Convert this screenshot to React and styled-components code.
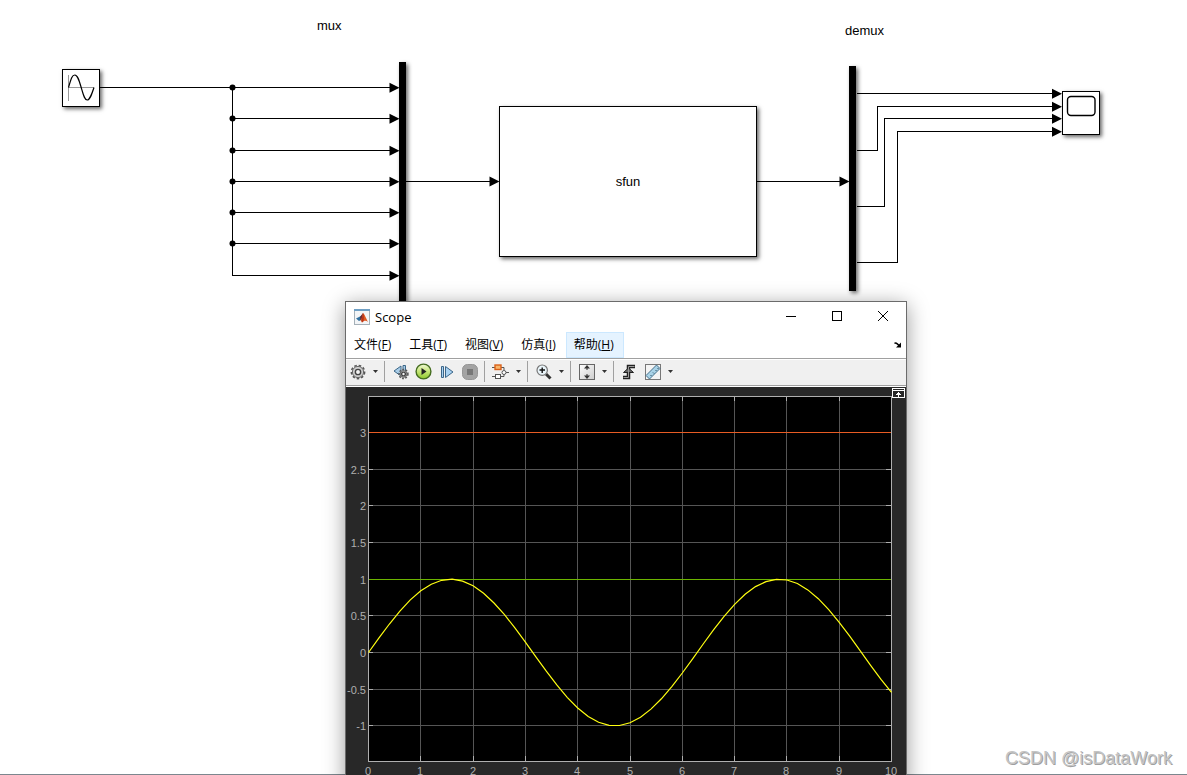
import React from 'react';
import styled, { createGlobalStyle } from 'styled-components';

const GlobalStyle = createGlobalStyle`
  * {
    box-sizing: border-box;
  }

  body {
    margin: 0;
    overflow: hidden;
    background: #fff;
    font-family: "Liberation Sans", Arial, sans-serif;
  }
`;

const Canvas = styled.main`
  position: relative;
  height: 100vh;
  overflow: hidden;
  background: linear-gradient(#7c878e, #7c878e) bottom / 100% 1px no-repeat;
`;

const Wires = styled.svg`
  position: absolute;
  top: 0;
  left: 0;
  width: 100%;
  height: 100%;
  overflow: visible;
`;

const Block = styled.div`
  position: absolute;
  left: ${(props) => props.$x}px;
  top: ${(props) => props.$y}px;
  width: ${(props) => props.$w}px;
  height: ${(props) => props.$h}px;
  display: flex;
  align-items: center;
  justify-content: center;
  border: 1px solid #000;
  background: ${(props) => (props.$solid ? '#000' : '#fff')};
  box-shadow: 2px 2px 4px rgba(0, 0, 0, 0.6);
  color: #000;
  font-size: 13px;
  line-height: 16px;
`;

const BlockName = styled.span`
  position: absolute;
  left: ${(props) => props.$x}px;
  top: ${(props) => props.$y}px;
  color: #000;
  font-size: 13px;
  line-height: 16px;
`;

const Window = styled.section`
  position: absolute;
  left: 345px;
  top: 301px;
  width: 562px;
  border: 1px solid #6b6b6b;
  background: #fff;
  box-shadow: 0 4px 20px rgba(0, 0, 0, 0.4);
  font-family: "Open Sans", "Noto Sans CJK SC", sans-serif;
`;

const TitleBar = styled.header`
  display: flex;
  align-items: center;
  height: 30px;
  padding-left: 8px;
`;

const Title = styled.h1`
  flex: 1;
  margin: 0 0 0 5px;
  font-size: 13px;
  font-weight: 400;
  line-height: 16px;
`;

const CaptionButton = styled.button`
  display: flex;
  align-items: center;
  align-self: flex-start;
  justify-content: center;
  width: 46px;
  height: 28px;
  padding: 0;
  border: 0;
  background: none;
`;

const MenuBar = styled.nav`
  display: flex;
  align-items: center;
  height: 26px;
  padding-right: 4px;
`;

const MenuItem = styled.button`
  height: 26px;
  padding: 0 9px 0 7px;
  border: 1px solid ${(props) => (props.$active ? '#cce8ff' : 'transparent')};
  background: ${(props) => (props.$active ? '#e5f3ff' : 'none')};
  color: #000;
  font-family: inherit;
  font-size: 12px;
  line-height: 24px;
  white-space: nowrap;
`;

const DockButton = styled.button`
  display: flex;
  margin-left: auto;
  padding: 0;
  border: 0;
  background: none;
`;

const ToolBar = styled.div`
  display: flex;
  align-items: center;
  height: 29px;
  padding-bottom: 2px;
  border-top: 1px solid #a0a0a0;
  border-bottom: 1px solid #fff;
  background: #f0f0f0;
  box-shadow: inset 0 1px #fff, inset 0 -1px #a0a0a0;
`;

const ToolButton = styled.button`
  display: flex;
  align-items: center;
  justify-content: center;
  width: 23px;
  height: 22px;
  padding: 0;
  border: 0;
  background: none;
`;

const CaretButton = styled(ToolButton)`
  width: 12px;
`;

const Separator = styled.span`
  width: 1px;
  height: 21px;
  margin: 0 4px 0 3px;
  background: #a0a0a0;
`;

const Plot = styled.svg`
  display: block;
  width: 560px;
  height: 400px;
  background: #282828;
  font-family: "Liberation Sans", Arial, sans-serif;
  font-size: 11px;
`;

const Watermark = styled.span`
  position: absolute;
  right: 15px;
  bottom: 5px;
  color: #c4c4c4;
  font-family: "Liberation Sans", Arial, sans-serif;
  font-size: 18px;
  line-height: 24px;
  text-shadow: 1px 1px 0 #a0a0a0;
`;

const muxInputs = [87, 118, 150, 181, 212, 243, 275];

const demuxOutputs = [
  { from: 93, bend: 877, to: 93 },
  { from: 150, bend: 877, to: 106 },
  { from: 206, bend: 884, to: 118 },
  { from: 262, bend: 897, to: 131 },
];

const menus = [
  { label: '文件', accessKey: 'F' },
  { label: '工具', accessKey: 'T' },
  { label: '视图', accessKey: 'V' },
  { label: '仿真', accessKey: 'I' },
  { label: '帮助', accessKey: 'H', active: true },
];

function Arrow({ x, y }) {
  return <path d={`M${x} ${y + 0.5} l-10 -5 v10 z`} />;
}

function ModelWires() {
  return (
    <Wires aria-hidden="true">
      <g fill="none" stroke="#000" shapeRendering="crispEdges">
        <path d="M100 87.5 H390 M232.5 87 V275.5" />
        {muxInputs.slice(1).map((y) => (
          <path key={y} d={`M232 ${y + 0.5} H390`} />
        ))}
        <path d="M406 181.5 H490 M757 181.5 H840" />
        {demuxOutputs.map(({ from, bend, to }) => (
          <path key={from} d={`M857 ${from + 0.5} H${bend + 0.5} V${to + 0.5} H1053`} />
        ))}
      </g>
      {muxInputs.slice(0, -1).map((y) => (
        <circle key={y} cx="232.5" cy={y + 0.5} r="3" />
      ))}
      {muxInputs.map((y) => (
        <Arrow key={y} x={399.5} y={y + 0.3} />
      ))}
      <Arrow x={499.5} y={181} />
      <Arrow x={849.5} y={181} />
      {demuxOutputs.map(({ to }) => (
        <Arrow key={to} x={1062} y={to + 0.3} />
      ))}
    </Wires>
  );
}

function SineIcon() {
  return (
    <svg width="30" height="30" fill="none" stroke="#000">
      <path d="M2.5 2 V28 M2 14.5 H28" stroke="#999" />
      <path d="M2.5 14.5 C5 6 6 2 8.8 2 S13 7 15.2 14.5 S18.5 27 21.2 27 S25.5 22 28 14.5" strokeWidth="1.2" />
    </svg>
  );
}

function ScopeScreenIcon() {
  return (
    <svg width="36" height="42" fill="none" stroke="#000">
      <rect x="4.5" y="4.5" width="27.5" height="19" rx="3.5" strokeWidth="1.4" />
    </svg>
  );
}

function MatlabIcon() {
  return (
    <svg width="16" height="16">
      <rect x="0.5" y="0.5" width="15" height="15" fill="#f3f5f7" stroke="#a5b0b8" />
      <rect x="0" y="0" width="16" height="2" fill="#6f9fc4" />
      <path d="M2 9.5 L6 7.5 L8 6 L7 11 L5 12 Z" fill="#2f6f9f" />
      <path d="M6 8 L9 4 L8.5 12 L6.5 11 Z" fill="#6c2b32" />
      <path d="M9 4 C10.5 5 12 9 14 13 C12 11.5 10.5 11 8 13.5 L6.5 11 C8 10 8.5 6 9 4 Z" fill="#df5a22" />
      <path d="M9 4 C10 6 10 9 9.5 12 L8 13.5 L7.5 11 Z" fill="#b5331c" />
    </svg>
  );
}

function GearShape({ cx, cy, r }) {
  return (
    <g transform={`translate(${cx} ${cy})`}>
      <circle r={r - 0.8} fill="none" stroke="#555" strokeWidth="1.6" strokeDasharray={`${r * 0.35} ${r * 0.26}`} />
      <circle r={r - 1.8} fill="#cfcfcf" stroke="#666" />
      <circle r={r * 0.36} fill="#f5f5f5" stroke="#444" strokeWidth="1.4" />
    </g>
  );
}

function GearIcon() {
  return (
    <svg width="16" height="16">
      <GearShape cx={8} cy={8} r={7.4} />
    </svg>
  );
}

function StepBackIcon() {
  return (
    <svg width="16" height="16">
      <path d="M1 7 L8 2 V12 Z M10 1.5 H12.5 V9 H10 Z" fill="#a9cde8" stroke="#3c6788" />
      <GearShape cx={10.5} cy={10} r={5.2} />
    </svg>
  );
}

function RunIcon() {
  return (
    <svg width="17" height="17">
      <defs>
        <linearGradient id="run" x1="0" y1="0" x2="0" y2="1">
          <stop offset="0" stopColor="#f2f9d8" />
          <stop offset="0.5" stopColor="#c4e574" />
          <stop offset="1" stopColor="#8cc62c" />
        </linearGradient>
      </defs>
      <circle cx="8.5" cy="8.5" r="7.4" fill="url(#run)" stroke="#446c20" strokeWidth="1.4" />
      <path d="M6.5 5 L11.5 8.5 L6.5 12 Z" fill="#222" />
    </svg>
  );
}

function StepForwardIcon() {
  return (
    <svg width="16" height="16">
      <path d="M2.5 2.5 H4.5 V13.5 H2.5 Z M6.5 2.5 L14 8 L6.5 13.5 Z" fill="#a9d2f2" stroke="#3b6588" />
    </svg>
  );
}

function StopIcon() {
  return (
    <svg width="16" height="16">
      <rect x="0.5" y="0.5" width="15" height="15" rx="5" fill="#a3a3a3" stroke="#969696" />
      <rect x="5" y="5" width="6" height="6" fill="#777" />
    </svg>
  );
}

function BlocksIcon() {
  return (
    <svg width="17" height="16" fill="#fff" stroke="#555">
      <path d="M0 3.5 H3 M9 3.5 H12 V6 M0 12.5 H3 M9 12.5 H12 V10 M14 8.5 H17" fill="none" />
      <rect x="3" y="1" width="6" height="4.5" fill="#f9b66c" stroke="#d9611a" strokeWidth="1.4" />
      <rect x="3.5" y="10.5" width="5" height="4" />
      <circle cx="12" cy="8.5" r="2" />
    </svg>
  );
}

function ZoomIcon() {
  return (
    <svg width="16" height="16">
      <path d="M10 10 L14.5 14.5" stroke="#333" strokeWidth="3" />
      <circle cx="6.2" cy="6.2" r="5.2" fill="#eaf5fa" stroke="#777" strokeWidth="1.2" />
      <path d="M3.5 6 H9 M6.2 3.5 V9" stroke="#111" strokeWidth="1.4" />
    </svg>
  );
}

function FitIcon() {
  return (
    <svg width="16" height="16">
      <defs>
        <linearGradient id="panel" x1="0" y1="0" x2="1" y2="1">
          <stop offset="0" stopColor="#fff" />
          <stop offset="1" stopColor="#ccc" />
        </linearGradient>
      </defs>
      <rect x="0.5" y="0.5" width="15" height="15" fill="url(#panel)" stroke="#666" />
      <path d="M8 1 L11 4.5 H5 Z M8 15 L11 11.5 H5 Z" fill="#333" />
      <path d="M8 4 V6 M8 10 V12" stroke="#333" />
    </svg>
  );
}

function TriggerIcon() {
  return (
    <svg width="15" height="16" fill="none">
      <path d="M1 13.5 H6.5 V2.5 H13" stroke="#222" strokeWidth="3.5" />
      <path d="M1.5 8.5 L6.5 4 L11.5 8.5 Z" fill="#666" stroke="#222" />
      <path d="M1.5 13.5 H6.5 V2.5 H12.5" stroke="#999" />
    </svg>
  );
}

function RulerIcon() {
  return (
    <svg width="16" height="16">
      <rect x="0.5" y="0.5" width="15" height="15" fill="#f4f4f4" stroke="#777" />
      <path d="M1 11.5 L11.5 1 L15 4.5 L4.5 15 Z" fill="#a9d3e8" stroke="#46718c" />
      <path d="M6.5 12 l-1 -1 M9 9.5 l-1 -1 M11.5 7 l-1 -1 M13.5 5 l-1 -1" stroke="#315267" />
    </svg>
  );
}

function Caret() {
  return (
    <CaretButton aria-label="More options">
      <svg width="5" height="3">
        <path d="M0 0 H5 L2.5 3 Z" fill="#333" />
      </svg>
    </CaretButton>
  );
}

// Plot area inside the svg
const left = 22;
const top = 9;
const right = 545;
const bottom = 374;
const unitX = 52.3;
const unitY = 73.3;
const zeroY = 265;

const toX = (t) => Math.round(left + t * unitX);
const toY = (v) => Math.round(zeroY - v * unitY);

const xTicks = [0, 1, 2, 3, 4, 5, 6, 7, 8, 9, 10];
const yTicks = [3, 2.5, 2, 1.5, 1, 0.5, 0, -0.5, -1];

const sinePoints = Array.from({ length: 51 }, (_, i) => {
  const t = i / 5;
  const x = left + 0.5 + t * unitX;
  const y = zeroY + 0.5 - Math.sin(t) * unitY;
  return `${x.toFixed(1)},${y.toFixed(1)}`;
}).join(' ');

function ScopePlot() {
  return (
    <Plot role="img" aria-label="Scope signals">
      <rect x={left} y={top} width={right - left} height={bottom - top} fill="#000" />
      <g fill="none" stroke="#555">
        {xTicks.map((t) => (
          <path key={t} d={`M${toX(t) + 0.5} ${top} V${bottom}`} />
        ))}
        {yTicks.map((v) => (
          <path key={v} d={`M${left} ${toY(v) + 0.5} H${right}`} />
        ))}
      </g>
      <g fill="none" stroke="#afafaf">
        <rect x={left + 0.5} y={top + 0.5} width={right - left} height={bottom - top} />
        {xTicks.map((t) => (
          <path key={t} d={`M${toX(t) + 0.5} ${top} v5 M${toX(t) + 0.5} ${bottom} v-5`} />
        ))}
        {yTicks.map((v) => (
          <path key={v} d={`M${left} ${toY(v) + 0.5} h5 M${right} ${toY(v) + 0.5} h-5`} />
        ))}
      </g>
      <rect x={left + 1} y={toY(3)} width={right - left - 1} height="1" fill="#e85c24" />
      <rect x={left + 1} y={toY(1)} width={right - left - 1} height="1" fill="#6cb400" />
      <polyline points={sinePoints} fill="none" stroke="#ffff11" strokeWidth="1.2" />
      <g fill="#afafaf">
        {yTicks.map((v) => (
          <text key={v} x={left - 2} y={toY(v) + 5} textAnchor="end">{v}</text>
        ))}
        {xTicks.map((t) => (
          <text key={t} x={toX(t)} y={bottom + 14} textAnchor="middle">{t}</text>
        ))}
      </g>
      <rect x="546.5" y="1.5" width="12" height="9" fill="#282828" stroke="#fff" />
      <path d="M547 3h11v1h-11z M552 5h1v1h1v1h1v1h-2v2h-1v-2h-2v-1h1v-1h1z" fill="#fff" />
    </Plot>
  );
}

function ScopeWindow() {
  return (
    <Window>
      <TitleBar>
        <MatlabIcon />
        <Title>Scope</Title>
        <CaptionButton aria-label="Minimize">
          <svg width="10" height="10"><path d="M0 5.5 H10" stroke="#000" /></svg>
        </CaptionButton>
        <CaptionButton aria-label="Maximize">
          <svg width="10" height="10"><rect x="0.5" y="0.5" width="9" height="9" fill="none" stroke="#000" /></svg>
        </CaptionButton>
        <CaptionButton aria-label="Close">
          <svg width="10" height="10"><path d="M0 0 L10 10 M10 0 L0 10" stroke="#000" /></svg>
        </CaptionButton>
      </TitleBar>
      <MenuBar>
        {menus.map(({ label, accessKey, active }) => (
          <MenuItem key={accessKey} $active={active}>
            {label}(<u>{accessKey}</u>)
          </MenuItem>
        ))}
        <DockButton aria-label="Dock">
          <svg width="8" height="6">
            <path d="M0.5 1.5 Q2 0 5 3.5" fill="none" stroke="#000" strokeWidth="1.5" />
            <path d="M7 0.5 V5.5 H2 Z" />
          </svg>
        </DockButton>
      </MenuBar>
      <ToolBar>
        <ToolButton aria-label="Configuration"><GearIcon /></ToolButton>
        <Caret />
        <Separator />
        <ToolButton aria-label="Step back"><StepBackIcon /></ToolButton>
        <ToolButton aria-label="Run"><RunIcon /></ToolButton>
        <ToolButton aria-label="Step forward"><StepForwardIcon /></ToolButton>
        <ToolButton aria-label="Stop"><StopIcon /></ToolButton>
        <Separator />
        <ToolButton aria-label="Highlight block"><BlocksIcon /></ToolButton>
        <Caret />
        <Separator />
        <ToolButton aria-label="Zoom"><ZoomIcon /></ToolButton>
        <Caret />
        <Separator />
        <ToolButton aria-label="Scale axes"><FitIcon /></ToolButton>
        <Caret />
        <Separator />
        <ToolButton aria-label="Triggers"><TriggerIcon /></ToolButton>
        <ToolButton aria-label="Measurements"><RulerIcon /></ToolButton>
        <Caret />
      </ToolBar>
      <ScopePlot />
    </Window>
  );
}

function App() {
  return (
    <>
      <GlobalStyle />
      <Canvas>
        <BlockName $x={317} $y={18}>mux</BlockName>
        <BlockName $x={845} $y={23}>demux</BlockName>
        <Block $x={62} $y={69} $w={38} $h={38}><SineIcon /></Block>
        <Block $x={399} $y={62} $w={7} $h={250} $solid />
        <Block $x={499} $y={106} $w={258} $h={151}>sfun</Block>
        <Block $x={849} $y={66} $w={7} $h={225} $solid />
        <Block $x={1062} $y={91} $w={38} $h={44}><ScopeScreenIcon /></Block>
        <ModelWires />
        <ScopeWindow />
        <Watermark>CSDN @isDataWork</Watermark>
      </Canvas>
    </>
  );
}

export default App;
